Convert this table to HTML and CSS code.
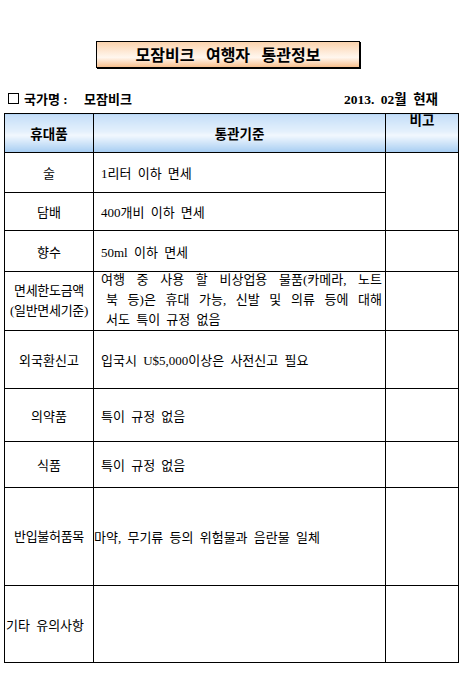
FILE: index.html
```html
<!DOCTYPE html>
<html lang="ko">
<head>
<meta charset="utf-8">
<title>모잠비크 여행자 통관정보</title>
<link rel="stylesheet" href="styles.css">
</head>
<body>
<div class="page">
  <div class="title">모잠비크 여행자 통관정보</div>
  <div class="info">
    <div class="country"><span class="box"></span><span class="label">국가명 :</span><span class="name">모잠비크</span></div>
    <div class="date">2013. 02월 현재</div>
  </div>
  <table class="customs">
    <colgroup>
      <col class="c1"><col class="c2"><col class="c3">
    </colgroup>
    <thead>
      <tr class="r-head">
        <th>휴대품</th>
        <th>통관기준</th>
        <th class="top">비고</th>
      </tr>
    </thead>
    <tbody>
      <tr class="r1"><td class="item">술</td><td class="rule">1리터 이하 면세</td><td rowspan="2"></td></tr>
      <tr class="r2"><td class="item">담배</td><td class="rule">400개비 이하 면세</td></tr>
      <tr class="r3"><td class="item">향수</td><td class="rule">50ml 이하 면세</td><td></td></tr>
      <tr class="r4"><td class="item tight">면세한도금액<br>(일반면세기준)</td><td class="rule multi"><div class="lines"><div class="j first">여행 중 사용 할 비상업용 물품(카메라, 노트</div><div class="j">북 등)은 휴대 가능, 신발 및 의류 등에 대해</div><div class="l">서도 특이 규정 없음</div></div></td><td></td></tr>
      <tr class="r5"><td class="item">외국환신고</td><td class="rule">입국시 U$5,000이상은 사전신고 필요</td><td></td></tr>
      <tr class="r6"><td class="item">의약품</td><td class="rule">특이 규정 없음</td><td></td></tr>
      <tr class="r7"><td class="item">식품</td><td class="rule">특이 규정 없음</td><td></td></tr>
      <tr class="r8"><td class="item tight">반입불허품목</td><td class="rule flush">마약, 무기류 등의 위험물과 음란물 일체</td><td></td></tr>
      <tr class="r9"><td class="item left">기타 유의사항</td><td></td><td></td></tr>
    </tbody>
  </table>
</div>
</body>
</html>
```

FILE: styles.css
```css
html, body {
  margin: 0;
  padding: 0;
  background: #ffffff;
}

.page {
  width: 463px;
  padding-top: 41px;
  font-family: "Liberation Serif", "Noto Sans CJK KR", serif;
  color: #000;
}

.title {
  margin: 0 0 0 96px;
  width: 262px;
  height: 25px;
  border: 1px solid #000;
  background: linear-gradient(to bottom, #fbd3ad 0%, #fff3e8 55%, #fff6ee 62%, #f8c08e 100%);
  font-family: "Noto Sans CJK KR", sans-serif;
  font-weight: bold;
  font-size: 16px;
  line-height: 25px;
  text-align: center;
  word-spacing: 7px;
  box-shadow: 1px 1px 0 #000;
}

.info {
  display: flex;
  justify-content: space-between;
  align-items: center;
  margin-top: 22px;
  padding: 0 25px 0 8px;
  height: 16px;
  font-family: "Liberation Serif", "Noto Sans CJK KR", serif;
  font-weight: bold;
  font-size: 13px;
}

.country {
  display: flex;
  align-items: center;
}

.box {
  width: 9px;
  height: 9px;
  border: 1.5px solid #000;
  margin-right: 5px;
}

.label {
  width: 60px;
}

.date {
  font-size: 13.5px;
  word-spacing: 3px;
}

.customs {
  margin: 7px 0 0 4px;
  width: 454px;
  border-collapse: collapse;
  table-layout: fixed;
  font-size: 13px;
  border: 1.5px solid #000;
}

.c1 { width: 89px; }
.c2 { width: 292px; }
.c3 { width: 73px; }

.customs th,
.customs td {
  border: 1px solid #000;
  padding: 0;
  vertical-align: middle;
}

.customs th {
  font-family: "Liberation Serif", "Noto Sans CJK KR", serif;
  font-weight: bold;
  font-size: 13.5px;
  background: linear-gradient(to bottom, #c4def8 0%, #e4f0fc 45%, #f2f8fe 55%, #a6cdf2 100%);
}

.customs th.top {
  vertical-align: top;
  padding-top: 0;
  line-height: 14px;
}

.r-head { height: 39px; }
.r1 { height: 40px; }
.r2 { height: 38px; }
.r3 { height: 41px; }
.r4 { height: 59px; }
.r5 { height: 58px; }
.r6 { height: 53px; }
.r7 { height: 46px; }
.r8 { height: 98px; }
.r9 { height: 77px; }

.item {
  text-align: center;
}

.item.tight {
  line-height: 20px;
  letter-spacing: -0.3px;
}

.item.left {
  text-align: left;
  padding-left: 1px;
  word-spacing: 3px;
}

.rule {
  padding-left: 7px !important;
  word-spacing: 3px;
}

.rule.flush {
  padding-left: 0 !important;
}

.rule.multi {
  padding: 0 3px 0 12px !important;
  vertical-align: top;
  word-spacing: 0;
}

.lines {
  height: 57px;
  line-height: 20px;
  margin-top: -2px;
}

.rule.multi .j {
  text-align: justify;
  text-align-last: justify;
}

.rule.multi .l {
  word-spacing: 3px;
}

.rule.multi .first {
  margin-left: -5px;
}
```
